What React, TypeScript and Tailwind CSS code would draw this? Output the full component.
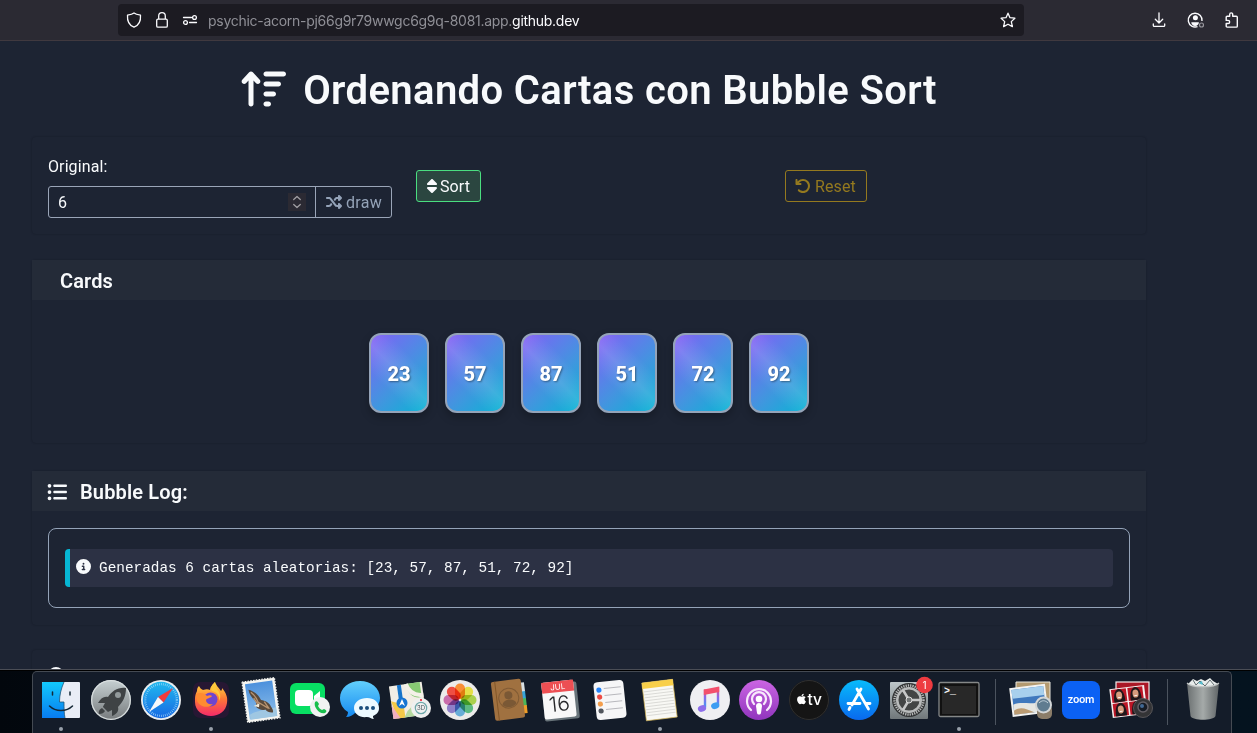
import React from "react";
import {
  FaArrowUpWideShort,
  FaSort,
  FaShuffle,
  FaArrowRotateLeft,
  FaListUl,
  FaCircleInfo,
  FaCircleQuestion,
  FaApple,
} from "react-icons/fa6";

const cards = [23, 57, 87, 51, 72, 92];

function Toolbar() {
  return (
    <div className="flex h-[41px] shrink-0 items-start border-b border-[#40393f] bg-[#2b2a33] pl-[118px] pt-1 text-[#fbfbfe]">
      <div className="flex h-8 w-[906px] items-center rounded bg-[#1c1b22] pl-2 pr-2">
        <svg className="h-4 w-4" viewBox="0 0 16 16" fill="none" stroke="currentColor" strokeWidth="1.3" strokeLinejoin="round">
          <path d="M8 .9C6.500 2.100 3.600 2.800 1.500 3.200 1.100 8.700 3.500 13.400 8 15.200c4.500-1.800 6.900-6.500 6.500-12C12.400 2.800 9.500 2.100 8 .9Z" />
        </svg>
        <svg className="ml-3 h-4 w-4" viewBox="0 0 16 16" fill="none" stroke="currentColor" strokeWidth="1.3">
          <rect x="2.700" y="7.200" width="10.600" height="8" rx="1.300" />
          <path d="M4.700 7V4a3.300 3.300 0 0 1 6.600 0v3" />
        </svg>
        <svg className="ml-3 h-4 w-4" viewBox="0 0 16 16" fill="none" stroke="currentColor" strokeWidth="1.300" strokeLinecap="round">
          <path d="M1.500 5.500h8M7.500 10.500h7" />
          <circle cx="12.500" cy="5.500" r="1.900" />
          <circle cx="3.500" cy="10.500" r="1.900" />
        </svg>
        <span className="ml-[10px] whitespace-nowrap pt-[2px] font-[Inter,sans-serif] text-[14px] leading-[30px] tracking-[-0.28px] text-[#8f8f96]">
          psychic-acorn-pj66g9r79wwgc6g9q-8081.app.<span className="text-[#fbfbfe]">github.dev</span>
        </span>
        <svg className="ml-auto h-4 w-4" viewBox="0 0 16 16" fill="none" stroke="currentColor" strokeWidth="1.3" strokeLinejoin="round">
          <path d="m8 1.200 2 4.500 4.900.5-3.600 3.400 1.100 5L8 12.200l-4.400 2.400 1.100-5L1.100 6.200 6 5.700Z" />
        </svg>
      </div>
      <div className="flex h-8 items-center pl-[127px]">
        <svg className="h-4 w-4" viewBox="0 0 16 16" fill="none" stroke="currentColor" strokeWidth="1.3" strokeLinecap="round" strokeLinejoin="round">
          <path d="M8 .8v10M4.300 7.300 8 11l3.700-3.700M2.300 12v1.400c0 .6.400 1 1 1h9.400c.6 0 1-.4 1-1V12" />
        </svg>
        <svg className="ml-[20px] h-[18px] w-[18px]" viewBox="0 0 18 18" fill="none" stroke="currentColor" strokeWidth="1.4">
          <path d="M10.500 15.600A6.900 6.900 0 1 1 15 10" />
          <circle cx="8.400" cy="6.800" r="2.500" fill="currentColor" stroke="none" />
          <path d="M4.300 11.200h7.600c0 2-1.500 3.700-3.800 3.700s-3.800-1.700-3.800-3.700Z" fill="currentColor" stroke="none" />
          <circle cx="14.500" cy="14" r="2" stroke="#96959c" strokeWidth="1.200" />
        </svg>
        <svg className="ml-[19px] h-4 w-4" viewBox="0 0 16 16" fill="none" stroke="currentColor" strokeWidth="1.400" strokeLinejoin="round">
          <path d="M2.200 5.200c0-.6.400-1 1-1h2.500V2.400a1.500 1.500 0 0 1 3 0v1.800h3.600c.6 0 1 .4 1 1v9c0 .5-.4.900-1 .9H3.100c-.5 0-.9-.4-.9-1v-2.600h1.900a1.500 1.500 0 0 0 0-3.100H2.200Z" />
        </svg>
      </div>
    </div>
  );
}

function Panel({ className, children }: { className: string; children: React.ReactNode }) {
  return (
    <section className={"w-[1114px] shrink-0 rounded-sm shadow-[0_0_2px_rgba(10,12,20,0.35)] " + className}>
      {children}
    </section>
  );
}

function SortPage() {
  return (
    <main className="flex flex-1 flex-col overflow-hidden pl-8 font-[Roboto,sans-serif] text-[#f8fafc]">
      <h1 className="flex h-[96px] w-[1114px] shrink-0 items-center justify-center text-[40px] font-semibold">
        <FaArrowUpWideShort className="mr-[17px] h-10 w-[45px]" />
        <span className="whitespace-nowrap pt-[3px] tracking-[0.38px]">Ordenando Cartas con Bubble Sort</span>
      </h1>

      <Panel className="flex h-[97px] items-start pl-4">
        <div className="w-[344px] pt-[17px]">
          <label className="block h-8 pt-px text-[16px] leading-[24px] tracking-[0.1px]">Original:</label>
          <div className="flex h-8 rounded-[3px] border border-[#9aa5b8]">
            <div className="flex flex-1 items-center justify-between border-r border-[#9aa5b8] pl-[9px] pr-[9px] text-[16px]">
              <span className="pt-[2px]">6</span>
              <span className="flex h-[18px] w-[18px] items-center justify-center bg-[#2b2a33] text-[#a3a1a5]">
                <svg className="h-[14px] w-[10px]" viewBox="0 0 10 14" fill="none" stroke="currentColor" strokeWidth="1.200" strokeLinecap="round" strokeLinejoin="round">
                  <path d="m1.700 4.500 3.300-3 3.300 3M1.700 9.500l3.300 3 3.300-3" />
                </svg>
              </span>
            </div>
            <button className="flex w-[75px] items-center gap-1 pl-[10px] text-[16px] tracking-[0.3px] text-[#94a3b8]">
              <FaShuffle className="h-4 w-4" />
              <span className="pt-[2px]">draw</span>
            </button>
          </div>
        </div>
        <button className="ml-6 mt-[33px] flex h-8 w-[65px] items-center rounded-[3px] border border-[#4ade80] bg-[#2b4640] pl-[10px] text-[16px]">
          <FaSort className="mr-[3px] h-4 w-[10px]" />
          <span className="pt-[2px] tracking-[0.1px]">Sort</span>
        </button>
        <button className="ml-[304px] mt-[33px] flex h-8 w-[82px] items-center rounded-[3px] border border-[#94791f] pl-[9px] text-[16px] text-[#94791f]">
          <FaArrowRotateLeft className="mr-1 h-4 w-4" />
          <span className="pt-[2px] tracking-[0.1px]">Reset</span>
        </button>
      </Panel>

      <Panel className="mt-[26px] h-[183px]">
        <h2 className="flex h-10 items-center bg-[#242b38] pl-7 pt-px text-[20px] font-semibold tracking-[0.1px]">Cards</h2>
        <div className="flex justify-center gap-4 pt-[33px]">
          {cards.map((value) => (
            <div
              key={value}
              className="flex h-20 w-[60px] items-center justify-center rounded-xl border-2 border-[#94a3b8] bg-[linear-gradient(45deg,transparent_30%,rgba(255,255,255,0.12)_50%,transparent_70%),linear-gradient(135deg,#8b5cf6_0%,#6875ee_24%,#4295df_57%,#06b6d4_100%)] bg-origin-border pt-px text-[20px] font-extrabold text-white shadow-[0_4px_8px_rgba(0,0,0,0.25)] [text-shadow:1px_1px_2px_rgba(0,0,0,0.4)]"
            >
              {value}
            </div>
          ))}
        </div>
      </Panel>

      <Panel className="mt-[28px] h-[154px]">
        <h2 className="flex h-10 items-center bg-[#242b38] pl-[15px] pt-px text-[20px] font-semibold tracking-[0.15px]">
          <FaListUl className="mr-[13px] h-5 w-5" />
          Bubble Log:
        </h2>
        <div className="mx-4 mt-[17px] flex h-20 items-center rounded-lg border border-[#94a3b8] px-4">
          <div className="flex h-[38px] w-full items-center rounded border-l-[5px] border-[#06b6d4] bg-[#2c3144] pl-[6px] font-['Liberation_Mono',monospace] text-[14.4px]">
            <FaCircleInfo className="mb-[3px] mr-2 h-[15px] w-[15px]" />
            <span className="pt-px tracking-[-0.01px]">Generadas 6 cartas aleatorias: [23, 57, 87, 51, 72, 92]</span>
          </div>
        </div>
      </Panel>

      <Panel className="mt-[25px] h-24">
        <h2 className="flex items-center gap-3 pl-4 pt-[15px] text-[20px] font-semibold leading-6">
          <FaCircleQuestion className="mb-[4px] h-4 w-4" />
          Complejidad de la burbuja
        </h2>
      </Panel>
    </main>
  );
}

function Finder() {
  return (
    <>
      <rect x="6" y="7" width="38" height="36" rx="1" fill="#e9edf6" />
      <path d="M7 7h21c-3 7-4.500 13-4.500 20H28c0 6 0 11 1 16H6V8Z" fill="url(#finder)" />
      <path d="M28 7c-3 7-4.500 13-4.500 20H28c0 6 0 11 1 16" fill="none" stroke="#1f5579" strokeWidth=".8" />
      <path d="M16.500 17v3M34 17v3M13.500 31c6 6 17 6 23 0" fill="none" stroke="#132735" strokeWidth="1.500" strokeLinecap="round" />
    </>
  );
}

function Launchpad() {
  return (
    <>
      <circle cx="25" cy="25" r="20" fill="url(#silver)" />
      <circle cx="25" cy="25" r="19.300" fill="none" stroke="#d9dfe0" strokeWidth="1.200" />
      <path d="M40 13c-8-1-14 3-18 9-4-1-7 1-10 6l7 0c-1 2-2 3-2 4l5 5 4-2v6c5-2 7-5 6-9 5-5 8-11 8-19Z" fill="#3f4345" />
      <circle cx="32" cy="20" r="3" fill="#92999b" />
      <path d="M16 33c-2 1-4 3-3 6 3 0 5-1 6-3Z" fill="#3f4345" />
    </>
  );
}

function Safari() {
  return (
    <>
      <circle cx="25" cy="25" r="20" fill="#e8edf0" />
      <circle cx="25" cy="25" r="18.200" fill="url(#safari)" />
      <circle cx="25" cy="25" r="15.800" fill="none" stroke="#a9ddfa" strokeWidth="2.200" strokeDasharray=".6 1.400" />
      <path d="m37 13-15 9 5.500 5.500Z" fill="#f23b3d" />
      <path d="m13 37 9-15 5.500 5.500Z" fill="#f7f8fa" />
    </>
  );
}

function Firefox() {
  return (
    <>
      <rect x="7" y="7" width="36" height="36" rx="7" fill="#271733" />
      <path d="M11 16c0-3 1-4 2-5 1 2 2 3 4 4 3-1 5-1 7 0 0-3 3-6 5-8 1 3 3 5 6 9 1-1 1-2 1-3 4 5 6 9 5 15-1 8-8 13-16 13S9 36 9 27c0-5 0-7 2-11Z" fill="url(#firefox)" />
      <circle cx="24.500" cy="24.500" r="7" fill="#6f45cf" />
      <path d="M10 19c4-2 8-1 11 2 2-1 4-1 5 0-1 2-5 2-6 4 0 3 3 5 7 4-5 5-13 3-16-3Z" fill="#ff8b31" />
      <path d="M29 7c-3 3-5 6-3 9 5 1 8 5 7 10 3-5 0-10-2-12-2-2-2-4-2-7Z" fill="#ffc83b" />
    </>
  );
}

function Mail() {
  return (
    <g transform="rotate(-8 25 25)">
      <rect x="10" y="6" width="30" height="38" fill="url(#sky)" stroke="#f5f5f1" strokeWidth="2.500" />
      <rect x="8.600" y="4.600" width="32.800" height="40.800" fill="none" stroke="#f5f5f1" strokeWidth="1.200" strokeDasharray="1.500 1.300" />
      <path d="M12 38c9-4 17-2 27-4v9H12Z" fill="#9fc7e2" />
      <path d="M14 13c5 2 9 6 11 12 4 1 8 4 9 8 1 2 2 4 1 6-3 0-6-2-7-4-3 1-7-1-9-4 1-2 1-4 0-6-3-4-5-8-5-12Z" fill="#59493c" />
      <path d="M16 16c4 4 5 7 6 11l9 7M18 22l4 8M28 27l4 8" stroke="#b99470" strokeWidth="1.300" fill="none" />
      <path d="m17 30 6-2-1 4Z" fill="#f3ead6" />
    </g>
  );
}

function FaceTime() {
  return (
    <>
      <rect x="5" y="8" width="35" height="31" rx="6" fill="#08df63" />
      <rect x="10" y="15" width="18" height="16" rx="4" fill="#fff" />
      <path d="m29 21 6-5v14l-6-4Z" fill="#fff" />
      <circle cx="35" cy="32" r="10" fill="#f1f2f2" />
      <path d="M30 27c2-2 3 0 4 2l-1 2c1 2 2 3 4 4l2-1c3 1 3 3 1 4-5 2-12-6-10-11Z" fill="#19bf4d" />
    </>
  );
}

function Messages() {
  return (
    <>
      <path d="M25 6C14 6 5 13 5 23c0 6 3 11 8 14 0 2-1 4-2 5 4 0 7-2 9-4 14 3 25-5 25-15S36 6 25 6Z" fill="url(#messages)" />
      <path d="M32 23c-7 0-13 4-13 10s6 10 13 9c3 0 4 2 7 2-1-1-1-2-1-3 4-2 6-4 6-8 0-6-5-10-12-10Z" fill="#eefaff" />
      <g fill="#1b4e7c"><circle cx="26" cy="33" r="2" /><circle cx="32" cy="33" r="2" /><circle cx="38" cy="33" r="2" /></g>
    </>
  );
}

function Maps() {
  return (
    <>
      <g transform="rotate(-8 22 25)">
        <path d="M6 9h33v33H6Z" fill="#f2eee5" />
        <path d="M18 9h19v15c-7 1-13-4-15-15Z" fill="#86c873" />
        <path d="M23 9c2 9 8 13 16 13" fill="none" stroke="#f4f1e8" strokeWidth="4" />
        <path d="m6 24 12 5v13H10Z" fill="#f4c948" />
        <path d="M6 28v14h7Z" fill="#f2afbc" />
        <path d="M16 9v17" stroke="#1674c9" strokeWidth="4" />
        <path d="m21 36 10-8 8 9v5H17Z" fill="#b5d9a0" />
      </g>
      <circle cx="17" cy="28" r="5.500" fill="#1775d2" />
      <path d="m17 24 3 7-3-2-3 2Z" fill="white" />
      <circle cx="36" cy="33" r="10" fill="#eff0ef" />
      <circle cx="36" cy="33" r="5.700" fill="none" stroke="#6ea8aa" strokeWidth="1.200" />
      <text x="36" y="35.200" textAnchor="middle" fontSize="6" fill="#425058" fontFamily="Inter, sans-serif">3D</text>
      <circle cx="36" cy="25" r="1" fill="#e12" />
    </>
  );
}

function Photos() {
  const colors = ["#f98e35", "#e6df48", "#aad04d", "#5dba82", "#68add7", "#8f80c9", "#c96caa", "#ef4f43"];
  return (
    <>
      <circle cx="25" cy="25" r="20" fill="#ecebea" />
      <g className="isolate">
        {colors.map((color, i) => (
          <rect key={color} className="mix-blend-multiply" x="20" y="8.500" width="10" height="15.500" rx="5" fill={color} transform={`rotate(${i * 45} 25 25)`} />
        ))}
      </g>
    </>
  );
}

function Contacts() {
  return (
    <g transform="rotate(-7 25 25)">
      <path d="M36 9h5v10h-5Z" fill="#d9e0e3" />
      <path d="M36 18h5v8h-5Z" fill="#38a5d8" />
      <path d="M36 25h5v8h-5Z" fill="#4bb759" />
      <path d="M36 32h5v8h-5Z" fill="#ee9e29" />
      <rect x="8" y="5" width="30" height="39" rx="2" fill="#a07140" />
      <path d="M12 5v39" stroke="#815627" />
      <circle cx="24" cy="23" r="10" fill="none" stroke="#815b34" />
      <circle cx="24" cy="20" r="4" fill="#7a5835" />
      <path d="M17 29c1-6 13-6 14 0-4 4-10 4-14 0Z" fill="#7a5835" />
    </g>
  );
}

function Calendar() {
  return (
    <g transform="rotate(-6 25 25)">
      <rect x="8" y="8" width="35" height="37" rx="2" fill="#68747a" />
      <rect x="8" y="6" width="32" height="37" rx="2" fill="#f8f8f8" />
      <path d="M8 6h32v11H8Z" fill="#ed4f53" />
      <text x="24" y="14.500" textAnchor="middle" fontSize="8" fill="white" fontFamily="Inter, sans-serif">JUL</text>
      <text x="24" y="36" textAnchor="middle" fontSize="21" fontWeight="300" fill="#27282a" fontFamily="Inter, sans-serif">16</text>
    </g>
  );
}

function Reminders() {
  return (
    <g transform="rotate(-6 25 25)">
      <rect x="10" y="6" width="30" height="38" rx="4" fill="#f6f6f7" />
      <path d="M20 13h17M20 20h17M20 27h17M20 34h17" stroke="#b8b8bd" strokeWidth="1" />
      <circle cx="15" cy="14" r="2.600" fill="#2784f7" />
      <circle cx="15" cy="21" r="2.600" fill="#ed4b43" />
      <circle cx="15" cy="28" r="2.600" fill="#f49e4c" />
      <circle cx="15" cy="35" r="2.600" fill="#52565d" />
    </g>
  );
}

function Notes() {
  return (
    <g transform="rotate(-7 25 25)">
      <rect x="9" y="6" width="31" height="38" fill="#f8f8f4" stroke="#d5b656" strokeWidth=".7" />
      <path d="M9 6h31v6H9Z" fill="#f8cf49" />
      <path d="M10 15h29M10 18h29M10 21h29M10 24h29M10 27h29M10 30h29M10 33h29M10 36h29M10 39h29" stroke="#cfcfcb" strokeWidth=".7" />
    </g>
  );
}

function Music() {
  return (
    <>
      <circle cx="25" cy="25" r="20" fill="#efeff2" />
      <path d="M18.800 14.500h2.400v18h-2.400ZM31.800 12h2.400v18h-2.400Z" fill="url(#music)" />
      <path d="m18.800 14.500 15.400-3V17l-15.400 3Z" fill="#f3506d" />
      <ellipse cx="17" cy="33.500" rx="4.200" ry="3.200" fill="#8d6eea" transform="rotate(-18 17 33.500)" />
      <ellipse cx="30.300" cy="30.800" rx="4.200" ry="3.200" fill="#3c9df2" transform="rotate(-18 30 31)" />
    </>
  );
}

function Podcasts() {
  return (
    <>
      <circle cx="25" cy="25" r="20" fill="url(#podcasts)" />
      <g fill="none" stroke="#f8e9fc" strokeWidth="2.200" strokeLinecap="round">
        <path d="M17 35a12 12 0 1 1 16 0" />
        <path d="M20 29a7 7 0 1 1 10 0" />
      </g>
      <circle cx="25" cy="24" r="3.300" fill="white" />
      <path d="M22 31c0-4 6-4 6 0l-1 7c-.5 2-3.500 2-4 0Z" fill="white" />
    </>
  );
}

function AppleTv() {
  return (
    <>
      <circle cx="25" cy="25" r="20" fill="#151515" />
      <circle cx="25" cy="25" r="19.500" fill="none" stroke="#303030" />
      <g transform="translate(11.500 18)">
        <FaApple size={12} color="white" />
      </g>
      <text x="23.500" y="30" fontSize="15.500" fill="white" fontFamily="Inter, sans-serif" fontWeight="500">tv</text>
    </>
  );
}

function AppStore() {
  return (
    <>
      <circle cx="25" cy="25" r="20" fill="url(#store)" />
      <g stroke="white" strokeWidth="2.800" strokeLinecap="round" fill="none">
        <path d="m27 14-9 16M23 14l11.500 20M14 28.500h12M31.500 28.500h4.500M16 32.500l-1 2" />
      </g>
    </>
  );
}

function Settings() {
  return (
    <>
      <rect x="6" y="7" width="38" height="37" rx="1" fill="url(#settings)" />
      <circle cx="25" cy="25" r="17" fill="#303233" />
      <circle cx="25" cy="25" r="14.500" fill="none" stroke="#b7b9b9" strokeWidth="2.500" strokeDasharray="1.300 1" />
      <circle cx="25" cy="25" r="11.800" fill="#434545" stroke="#b9bbbb" strokeWidth="2.500" />
      <path d="M25 25h11M25 25l-6-10M25 25l-6 10" stroke="#c6c7c7" strokeWidth="2.500" />
      <circle cx="25" cy="25" r="3" fill="#747878" stroke="#ddd" />
      <circle cx="40.500" cy="10" r="8.300" fill="#ee3b40" />
      <text x="40.500" y="13.500" textAnchor="middle" fontSize="10" fill="white" fontFamily="Inter, sans-serif">1</text>
    </>
  );
}

function Terminal() {
  return (
    <>
      <rect x="5" y="7.500" width="40" height="34" rx="1.500" fill="#111" stroke="#858888" strokeWidth="1.300" />
      <rect x="8" y="11" width="34" height="28" fill="#282828" />
      <text x="10" y="19" fontSize="10" fontWeight="bold" fill="#f4f4f4" fontFamily="Liberation Mono, monospace">&gt;_</text>
    </>
  );
}

function Preview() {
  return (
    <>
      <path d="M10 7h34v28H10Z" fill="#b39a70" stroke="#eae8df" />
      <g transform="rotate(-7 22 27)">
        <rect x="6" y="12" width="34" height="27" fill="#3f78bd" stroke="#f3f3f1" strokeWidth="2" />
        <path d="M7 13h32v9H7Z" fill="#a8d0ed" />
        <path d="M7 28c9-3 17 3 32 0v10H7Z" fill="#e5e6e2" />
        <path d="M7 34c8-4 12 0 20 4H7Z" fill="#bb9b72" />
      </g>
      <rect x="31" y="30" width="15" height="14" rx="5" fill="#8b7d69" />
      <circle cx="37.500" cy="30" r="7.500" fill="#5f7c90" stroke="#d2d6d7" strokeWidth="2" />
      <path d="M33 28c3-3 6-3 9 0" stroke="#c1d1da" fill="none" />
    </>
  );
}

function Zoom() {
  return (
    <>
      <rect x="6" y="6" width="38" height="38" rx="8" fill="#0b61f4" />
      <text x="25" y="28" textAnchor="middle" fontSize="10.500" fontWeight="600" fill="white" fontFamily="Inter, sans-serif" textLength="27">zoom</text>
    </>
  );
}

function Portrait({ x, y }: { x: number; y: number }) {
  return (
    <g transform={`translate(${x} ${y})`}>
      <rect width="15" height="13" fill="#bb1626" />
      <path d="M2 13c-1-17 12-18 11 0Z" fill="#20171b" />
      <ellipse cx="7.500" cy="6.500" rx="3" ry="4" fill="#d79b7d" />
      <path d="M6 8.500h3" stroke="white" strokeWidth=".8" />
    </g>
  );
}

function PhotoBooth() {
  return (
    <>
      <rect x="10" y="7" width="33" height="30" fill="#aa1726" stroke="#f2ebec" strokeWidth="1.200" />
      <g transform="rotate(-7 22 27)">
        <rect x="5" y="12" width="35" height="29" fill="#f4eeee" />
        <Portrait x={6.500} y={13} /><Portrait x={23} y={13} />
        <Portrait x={6.500} y={27} /><Portrait x={23} y={27} />
      </g>
      <circle cx="37" cy="33" r="9.500" fill="#343436" stroke="#575558" />
      <circle cx="37" cy="32" r="5" fill="#171c25" stroke="#646067" strokeWidth="1.500" />
      <circle cx="36" cy="31" r="2" fill="#426894" />
    </>
  );
}

function Trash() {
  return (
    <>
      <path d="m10 9 5-5 4 2 4-2 4 2 5-3 3 3 5 3v5H10Z" fill="#e8eceb" />
      <path d="m15 5 3 5 4-4 5 5 5-6 4 5" stroke="#636e72" strokeWidth="1" fill="none" />
      <path d="m20 8 4-2 1 4Z" fill="#55bccd" />
      <path d="M9 8c5 5 27 5 32 0l-3.500 33c-2 5-23 5-25 0Z" fill="url(#trash)" />
      <path d="M9 8c5 5 27 5 32 0" fill="none" stroke="#c0c4c4" strokeWidth="1.200" />
    </>
  );
}

const apps = [
  { name: "Finder", Icon: Finder, running: true },
  { name: "Launchpad", Icon: Launchpad },
  { name: "Safari", Icon: Safari },
  { name: "Firefox", Icon: Firefox, running: true },
  { name: "Mail", Icon: Mail },
  { name: "FaceTime", Icon: FaceTime },
  { name: "Messages", Icon: Messages },
  { name: "Maps", Icon: Maps },
  { name: "Photos", Icon: Photos },
  { name: "Contacts", Icon: Contacts },
  { name: "Calendar", Icon: Calendar },
  { name: "Reminders", Icon: Reminders },
  { name: "Notes", Icon: Notes, running: true },
  { name: "Music", Icon: Music },
  { name: "Podcasts", Icon: Podcasts },
  { name: "TV", Icon: AppleTv },
  { name: "App Store", Icon: AppStore },
  { name: "Settings", Icon: Settings },
  { name: "Terminal", Icon: Terminal, running: true },
];
const recent = [
  { name: "Preview", Icon: Preview },
  { name: "Zoom", Icon: Zoom },
  { name: "Photo Booth", Icon: PhotoBooth },
];

function DockItem({ Icon, running }: { Icon: () => React.ReactElement; running?: boolean }) {
  return (
    <div className="flex w-[49.9px] shrink-0 flex-col items-center pt-[3px]">
      <svg className="h-[50px] w-[50px] shrink-0 overflow-visible" viewBox="0 0 50 50"><Icon /></svg>
      {running && <span className="mt-[2px] h-1 w-1 rounded-full bg-[#98a0aa]" />}
    </div>
  );
}

function Gradient({ id, stops, diagonal }: { id: string; stops: string[]; diagonal?: boolean }) {
  return (
    <linearGradient id={id} x1="0" y1="0" x2={diagonal ? "1" : "0"} y2={diagonal ? "0" : "1"}>
      {stops.map((color, i) => <stop key={i} offset={i / (stops.length - 1)} stopColor={color} />)}
    </linearGradient>
  );
}

function Dock() {
  return (
    <div className="flex h-[62px] shrink-0 flex-col bg-[linear-gradient(90deg,#02070d,#031220_50%,#04131f)] px-8">
      <svg className="absolute h-0 w-0">
        <defs>
          <Gradient id="finder" stops={["#12c9fb", "#087cf0"]} />
          <Gradient id="silver" stops={["#c6d0d2", "#777b7d"]} />
          <Gradient id="safari" stops={["#20b8ef", "#176ae3"]} />
          <Gradient id="firefox" stops={["#ffdf3d", "#ff7737", "#f52b69"]} />
          <Gradient id="sky" stops={["#4a8fdc", "#8fc0ea"]} />
          <Gradient id="messages" stops={["#62cffc", "#168af0"]} />
          <Gradient id="music" stops={["#f3506d", "#8a69ec", "#3c9df2"]} />
          <Gradient id="podcasts" stops={["#cb65e3", "#9035bd"]} />
          <Gradient id="store" stops={["#08bbfb", "#0969ee"]} />
          <Gradient id="settings" stops={["#bdc6c9", "#70777a"]} />
          <Gradient id="trash" stops={["#6b7071", "#a5aaa9", "#606567"]} diagonal />
        </defs>
      </svg>
      <div className="flex h-[62px] w-[1200px] shrink-0 self-start rounded-t-[5px] border border-b-0 border-[#444a52] bg-[#141c29] pl-[3px]">
        {apps.map((app) => <DockItem key={app.name} Icon={app.Icon} running={app.running} />)}
        <span className="ml-[11px] mr-[10px] mt-[7px] h-[46px] w-px bg-[#4b535e]" />
        {recent.map((app) => <DockItem key={app.name} Icon={app.Icon} />)}
        <span className="ml-[11px] mr-[10px] mt-[7px] h-[46px] w-px bg-[#4b535e]" />
        <DockItem Icon={Trash} />
      </div>
    </div>
  );
}

export default function App() {
  return (
    <div className="flex h-[733px] w-[1257px] flex-col overflow-hidden bg-black">
      <div className="flex h-[669px] shrink-0 flex-col overflow-hidden bg-[#1d2433]">
        <Toolbar />
        <SortPage />
      </div>
      <div className="h-px shrink-0 bg-[#4a4d55]" />
      <div className="h-px shrink-0 bg-black" />
      <Dock />
    </div>
  );
}
